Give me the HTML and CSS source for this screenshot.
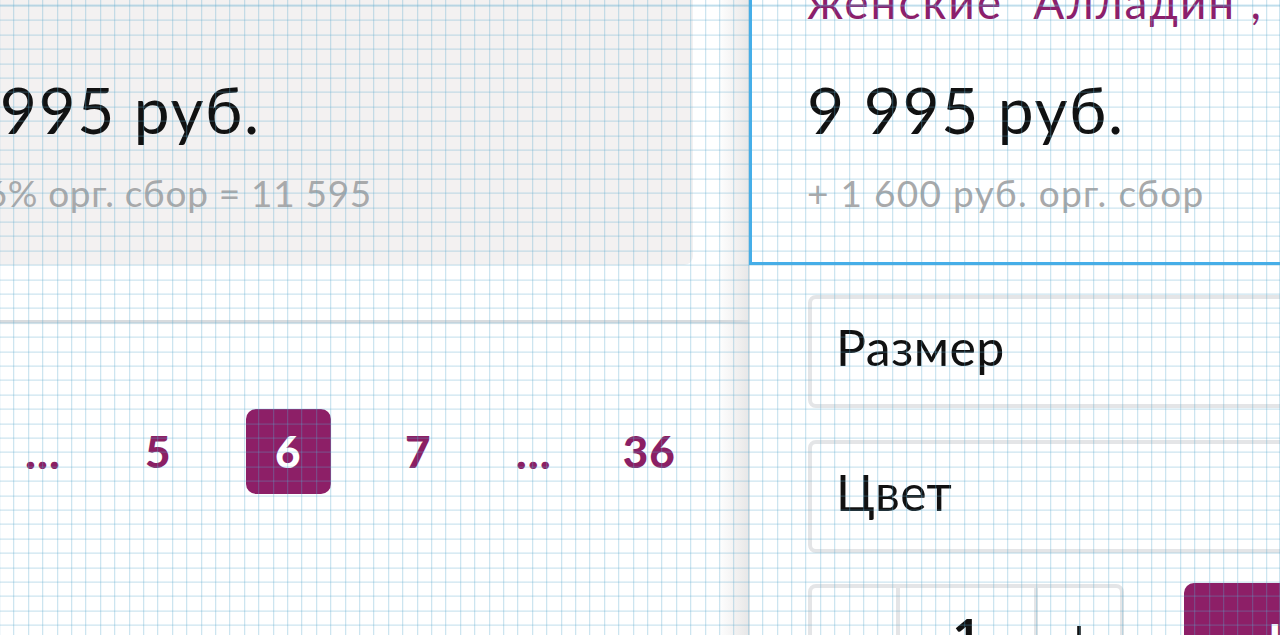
FILE: index.html
```html
<!DOCTYPE html>
<html lang="ru">
<head>
<meta charset="utf-8">
<title>Товар</title>
<link rel="stylesheet" href="styles.css">
</head>
<body>
<div class="layout">
  <section class="left">
    <div class="offer-card">
      <div class="price">9 995 руб.</div>
      <div class="sub">+ 16% орг. сбор = 11 595</div>
    </div>
    <div class="divider"></div>
    <nav class="pager">
      <span class="dots">...</span>
      <a class="page">5</a>
      <a class="page active">6</a>
      <a class="page">7</a>
      <span class="dots">...</span>
      <a class="page">36</a>
    </nav>
  </section>
  <section class="right">
    <div class="product-card">
      <div class="title">женские "Алладин",</div>
      <div class="price">9 995 руб.</div>
      <div class="sub">+ 1 600 руб. орг. сбор</div>
    </div>
    <div class="option">Размер</div>
    <div class="option">Цвет</div>
    <div class="buy-row">
      <div class="qty">
        <span class="qty-btn minus">−</span>
        <span class="qty-val">1</span>
        <span class="qty-btn plus">+</span>
      </div>
      <button class="buy">Купить</button>
    </div>
  </section>
</div>
</body>
</html>
```

FILE: styles.css
```css
html, body {
  margin: 0;
  padding: 0;
  height: 100%;
  overflow: hidden;
  background: #ffffff;
}

body {
  font-family: "Lato", "Open Sans", "Noto Sans", sans-serif;
  color: #111111;
}

/* squared-paper overlay lying over the whole page */
body::after {
  content: "";
  position: fixed;
  inset: 0;
  pointer-events: none;
  z-index: 10;
  background-image:
    repeating-linear-gradient(to right, rgba(88, 168, 205, 0.38) 0, rgba(88, 168, 205, 0.38) 1px, transparent 1px, transparent 14.4px),
    repeating-linear-gradient(to bottom, rgba(88, 168, 205, 0.38) 0, rgba(88, 168, 205, 0.38) 1px, transparent 1px, transparent 14.4px);
  background-position: -0.8px 0, 0 5.6px;
}

.layout {
  display: flex;
  height: 635px;
}

/* ---------- left column ---------- */
.left {
  flex: 0 0 860px;
  margin-left: -110px;
  display: flex;
  flex-direction: column;
  background: linear-gradient(to left, #e6e6e7 0, #efeeee 10px, rgba(255, 255, 255, 0) 32px);
}

.offer-card {
  width: 803px;
  box-sizing: border-box;
  margin-top: -40px;
  padding: 110px 0 47px 53px;
  background: #f3f1f1;
  border-bottom-right-radius: 9px;
}

.price {
  font-size: 64px;
  line-height: 80px;
  letter-spacing: 1.6px;
  color: #111111;
  white-space: nowrap;
}

.sub {
  margin-top: 18px;
  font-size: 37px;
  line-height: 50px;
  letter-spacing: 1.3px;
  color: #a9a9aa;
  white-space: nowrap;
}

.offer-card .sub {
  margin-left: -12px;
  letter-spacing: 0.7px;
}

.divider {
  width: 858px;
  height: 3px;
  margin-top: 55px;
  background: #d8dbde;
  box-shadow: 0 1px 2px rgba(0, 0, 0, 0.06);
}

.pager {
  display: flex;
  align-items: center;
  gap: 45px;
  margin-top: 86px;
  padding-left: 125px;
}

.page {
  width: 85px;
  height: 85px;
  line-height: 85px;
  text-align: center;
  font-size: 44px;
  font-weight: 900;
  letter-spacing: 1px;
  color: #8b1f64;
  border-radius: 10px;
}

.page.active {
  background: #8d1f67;
  color: #ffffff;
}

.dots {
  margin: 0 10px;
  font-size: 46px;
  font-weight: 900;
  line-height: 85px;
  letter-spacing: 1px;
  color: #8b1f64;
}

/* ---------- right column ---------- */
.right {
  flex: 1;
  display: flex;
  flex-direction: column;
  margin-left: -1px;
  min-width: 0;
}

.product-card {
  margin-top: -60px;
  margin-right: -120px;
  padding: 31px 0 44px 55px;
  border: 3px solid #45aee9;
  background: #ffffff;
}

.title {
  font-size: 46px;
  line-height: 56px;
  letter-spacing: 2px;
  color: #8c1f6c;
  white-space: nowrap;
}

.product-card .price {
  margin-top: 40px;
}

.option {
  margin: 30px -120px 0 59px;
  height: 113px;
  box-sizing: border-box;
  border: 4px solid #e4e5e7;
  border-radius: 8px;
  padding: 0 0 8px 24px;
  font-size: 50px;
  line-height: 97px;
  letter-spacing: 0.4px;
  color: #111111;
}

.option + .option {
  margin-top: 32px;
}

.buy-row {
  display: flex;
  gap: 60px;
  margin: 31px -120px 0 59px;
}

.qty {
  display: flex;
  flex: 0 0 316px;
  height: 113px;
  box-sizing: border-box;
  border: 4px solid #e4e5e7;
  border-radius: 8px;
}

.qty-btn,
.qty-val {
  display: flex;
  align-items: center;
  justify-content: center;
  padding-bottom: 10px;
  font-size: 50px;
  color: #111111;
}

.qty-btn.minus {
  flex: 0 0 84px;
}

.qty-val {
  flex: 0 0 142px;
  box-sizing: border-box;
  border-left: 4px solid #e4e5e7;
  border-right: 4px solid #e4e5e7;
  font-weight: 700;
}

.qty-btn.plus {
  flex: 1;
}

.buy {
  flex: 1;
  height: 113px;
  margin-top: -1px;
  border: 0;
  border-radius: 10px;
  background: #8d1f67;
  color: #ffffff;
  font-family: inherit;
  font-size: 46px;
  font-weight: 700;
  text-align: left;
  padding: 0 0 0 84px;
}
```
